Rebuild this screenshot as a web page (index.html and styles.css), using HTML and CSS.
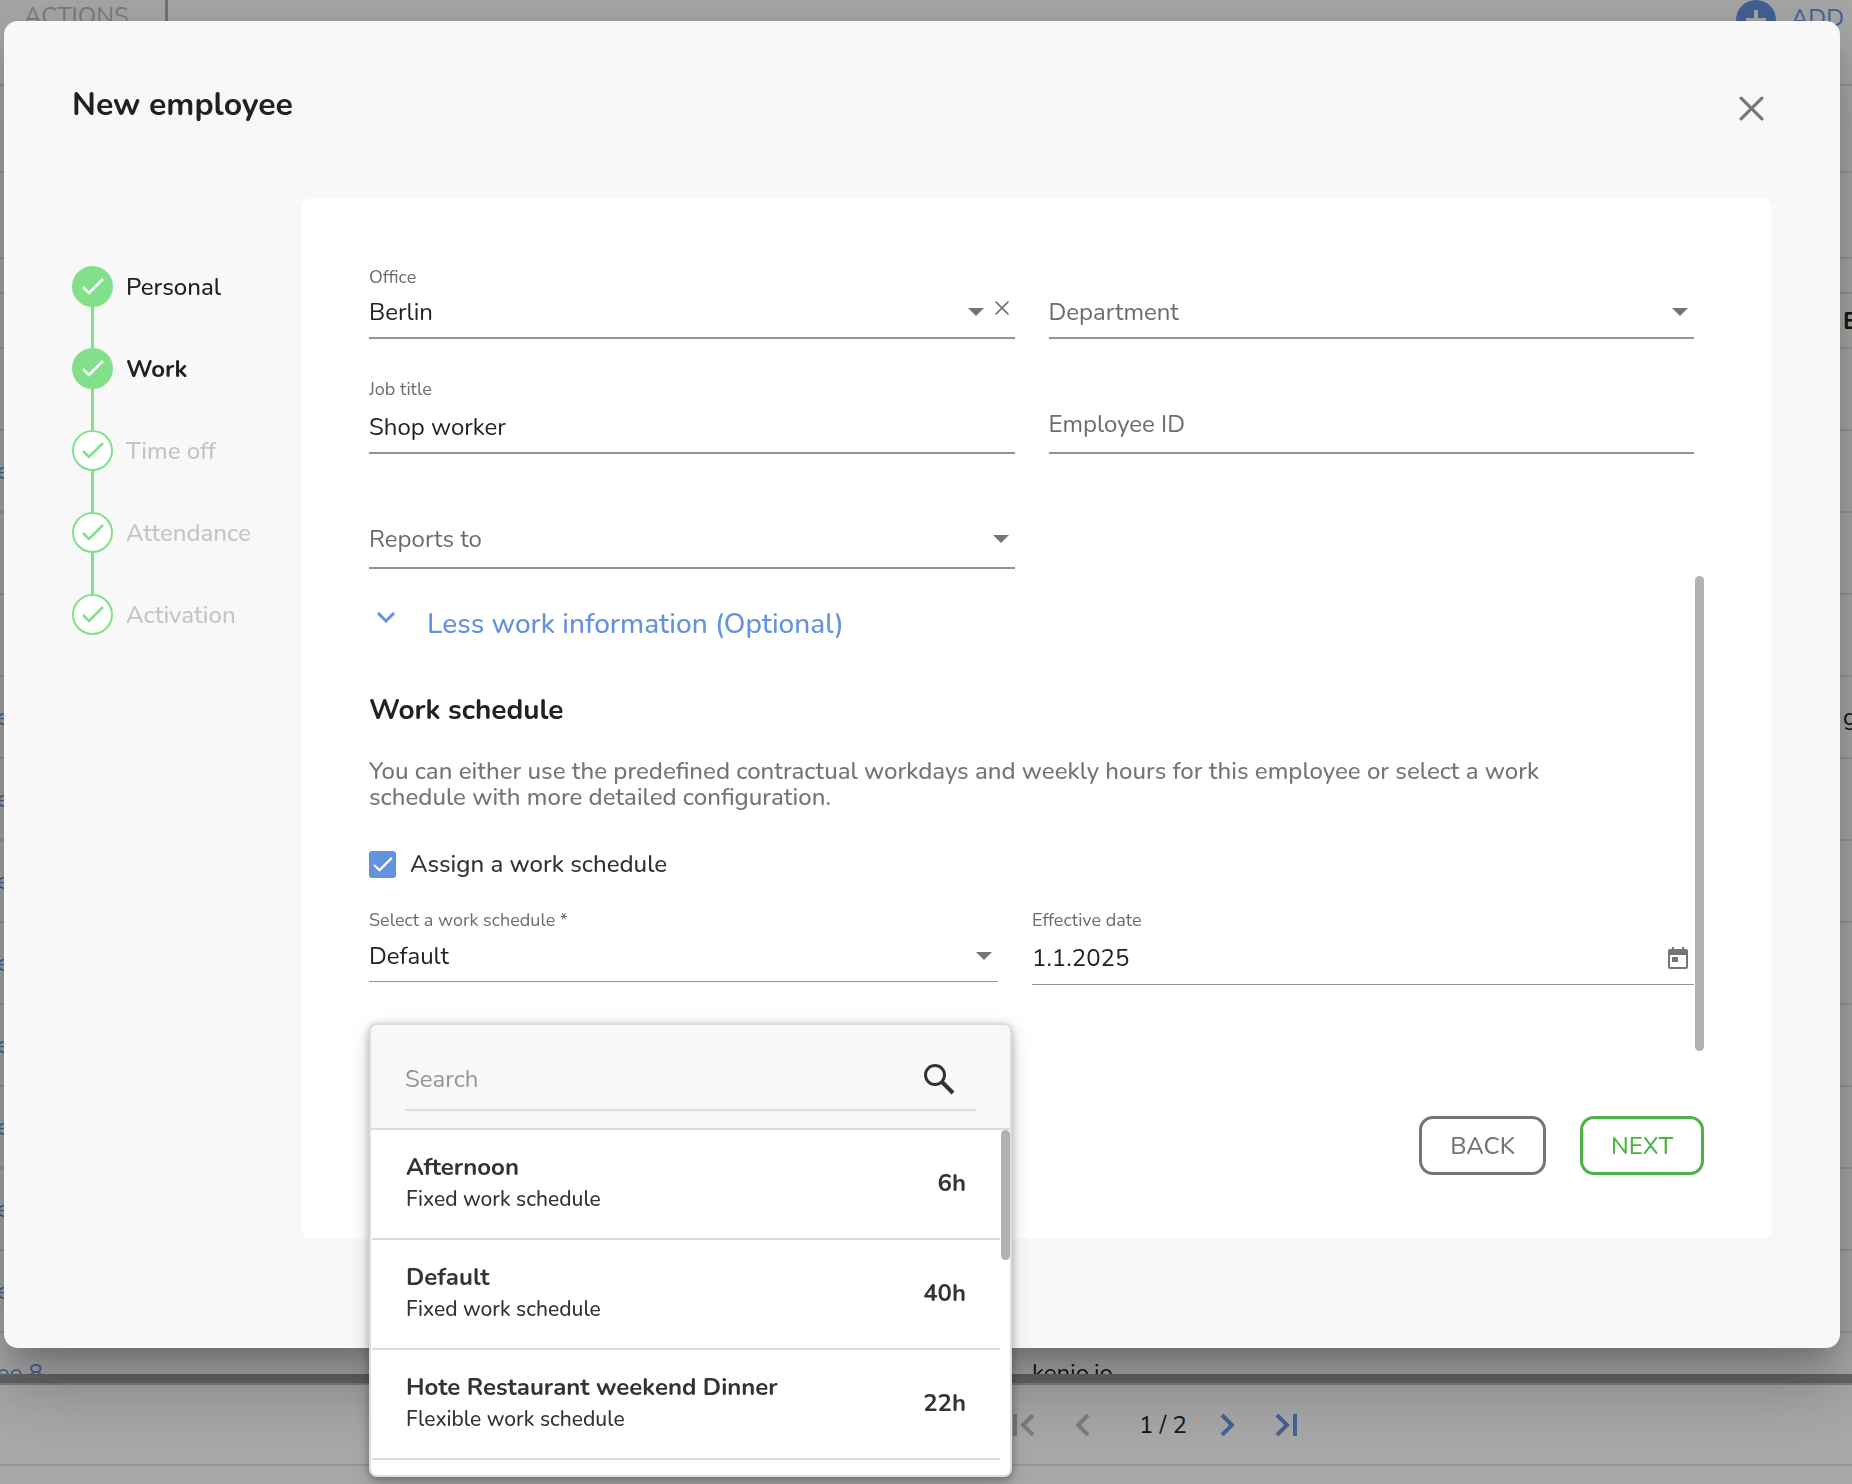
FILE: index.html
```html
<!DOCTYPE html>
<html lang="en">
<head>
    <meta charset="UTF-8">
    <meta name="viewport" content="width=device-width, initial-scale=1.0">
    <title>New employee</title>
    <link rel="stylesheet" href="styles.css">
</head>
<body>
    <svg class="sprite" aria-hidden="true">
        <symbol id="check" viewBox="0 0 22 17"><path d="M1 9l6 6L21 1" fill="none" stroke="currentColor" stroke-width="2.6"/></symbol>
        <symbol id="caret" viewBox="0 0 16 8"><path d="M0 0h16L8 8z" fill="currentColor"/></symbol>
        <symbol id="cross" viewBox="0 0 24 24"><path d="M2 2l20 20M22 2L2 22" fill="none" stroke="currentColor" stroke-width="3" stroke-linecap="round"/></symbol>
    </svg>

    <div class="page">
        <div class="toolbar">
            <span class="actions">ACTIONS</span>
            <button type="button" class="add">
                <svg width="40" height="40" viewBox="0 0 40 40"><circle cx="20" cy="20" r="20" fill="#6392de"/><path d="M20 10v20M10 20h20" stroke="#f7f7f7" stroke-width="4"/></svg>
                ADD
            </button>
        </div>
        <div class="tableWrap">
            <table class="people">
                <colgroup><col class="colName"><col class="colCompany"><col></colgroup>
                <tr class="filters"><td colspan="3"></td></tr>
                <tr class="filters"><td colspan="3"></td></tr>
                <tr class="spacer"><td colspan="3"></td></tr>
                <tr class="head"><th></th><th></th><th>E</th></tr>
                <tr><td></td><td></td><td></td></tr>
                <tr><td><a href="#">Employee</a></td><td></td><td></td></tr>
                <tr><td></td><td></td><td></td></tr>
                <tr><td></td><td></td><td></td></tr>
                <tr><td><a href="#">Employee</a></td><td></td><td>g</td></tr>
                <tr><td><a href="#">Employee</a></td><td></td><td></td></tr>
                <tr><td><a href="#">Employee</a></td><td></td><td></td></tr>
                <tr><td><a href="#">Employee</a></td><td></td><td></td></tr>
                <tr><td><a href="#">Employee</a></td><td></td><td></td></tr>
                <tr><td><a href="#">Employee</a></td><td></td><td></td></tr>
                <tr><td><a href="#">Employee</a></td><td></td><td></td></tr>
                <tr><td><a href="#">Employee</a></td><td></td><td></td></tr>
                <tr><td><a href="#">Employee 8</a></td><td>kenjo.io</td><td></td></tr>
            </table>
        </div>
        <div class="scrollX"></div>
        <div class="pager">
            <button type="button" class="off" aria-label="First page"><svg width="22" height="22" viewBox="0 0 22 22"><path d="M2 0v22M20 1L10 11l10 10"/></svg></button>
            <button type="button" class="off" aria-label="Previous page"><svg width="14" height="22" viewBox="0 0 14 22"><path d="M12 1L2 11l10 10"/></svg></button>
            <span>1 / 2</span>
            <button type="button" aria-label="Next page"><svg width="14" height="22" viewBox="0 0 14 22"><path d="M2 1l10 10L2 21"/></svg></button>
            <button type="button" aria-label="Last page"><svg width="22" height="22" viewBox="0 0 22 22"><path d="M2 1l10 10L2 21M20 0v22"/></svg></button>
        </div>
    </div>

    <div class="overlay">
        <div class="modal" role="dialog" aria-labelledby="modalTitle">
            <div class="modalHeader">
                <h1 id="modalTitle">New employee</h1>
                <button type="button" class="close" aria-label="Close"><svg width="25" height="25"><use href="#cross"/></svg></button>
            </div>
            <div class="modalBody">
                <ol class="steps">
                    <li class="done"><span class="dot"><svg width="22" height="17"><use href="#check"/></svg></span>Personal</li>
                    <li class="done current"><span class="dot"><svg width="22" height="17"><use href="#check"/></svg></span>Work</li>
                    <li><span class="dot"><svg width="22" height="17"><use href="#check"/></svg></span>Time off</li>
                    <li><span class="dot"><svg width="22" height="17"><use href="#check"/></svg></span>Attendance</li>
                    <li><span class="dot"><svg width="22" height="17"><use href="#check"/></svg></span>Activation</li>
                </ol>

                <form class="panel">
                    <div class="scrollArea">
                        <div class="fields">
                            <div class="row">
                                <div class="field">
                                    <label for="office">Office</label>
                                    <div class="box">
                                        <select id="office"><option>Berlin</option></select>
                                        <svg class="caret" width="16" height="8"><use href="#caret"/></svg>
                                        <button type="button" class="clear" aria-label="Clear office"><svg width="14" height="14"><use href="#cross"/></svg></button>
                                    </div>
                                </div>
                                <div class="field empty">
                                    <div class="box">
                                        <select id="department" aria-label="Department"><option>Department</option></select>
                                        <svg class="caret" width="16" height="8"><use href="#caret"/></svg>
                                    </div>
                                </div>
                            </div>

                            <div class="row">
                                <div class="field">
                                    <label for="jobTitle">Job title</label>
                                    <div class="box tall"><input type="text" id="jobTitle" value="Shop worker"></div>
                                </div>
                                <div class="field empty">
                                    <div class="box raised"><input type="text" id="employeeId" aria-label="Employee ID" placeholder="Employee ID"></div>
                                </div>
                            </div>

                            <div class="row last">
                                <div class="field empty">
                                    <div class="box raised">
                                        <select id="reportsTo" aria-label="Reports to"><option>Reports to</option></select>
                                        <svg class="caret" width="16" height="8"><use href="#caret"/></svg>
                                    </div>
                                </div>
                            </div>

                            <button type="button" class="toggle">
                                <svg width="18" height="12" viewBox="0 0 18 12"><path d="M1 1l8 8 8-8" fill="none" stroke="currentColor" stroke-width="3"/></svg>
                                Less work information (Optional)
                            </button>

                            <h2>Work schedule</h2>
                            <p>You can either use the predefined contractual workdays and weekly hours for this employee or select a work schedule with more detailed configuration.</p>

                            <label class="checkRow">
                                <span class="tick">
                                    <input type="checkbox" checked>
                                    <svg width="20" height="15"><use href="#check"/></svg>
                                </span>
                                Assign a work schedule
                            </label>

                            <div class="row schedule">
                                <div class="field">
                                    <label for="workSchedule">Select a work schedule *</label>
                                    <div class="box">
                                        <select id="workSchedule"><option>Default</option></select>
                                        <svg class="caret" width="16" height="8"><use href="#caret"/></svg>
                                    </div>

                                    <!-- open list of schedules -->
                                    <div class="dropdown">
                                        <div class="searchHead">
                                            <div class="search">
                                                <input type="text" placeholder="Search" aria-label="Search">
                                                <svg width="32" height="32" viewBox="0 0 32 32"><circle cx="12" cy="12" r="9.5" fill="none" stroke="currentColor" stroke-width="3"/><path d="M19 19l11 11" stroke="currentColor" stroke-width="4"/></svg>
                                            </div>
                                        </div>
                                        <div class="optionArea">
                                            <ul class="options">
                                                <li><div><strong>Afternoon</strong><small>Fixed work schedule</small></div><b>6h</b></li>
                                                <li><div><strong>Default</strong><small>Fixed work schedule</small></div><b>40h</b></li>
                                                <li><div><strong>Hote Restaurant weekend Dinner</strong><small>Flexible work schedule</small></div><b>22h</b></li>
                                            </ul>
                                            <div class="thumb"></div>
                                        </div>
                                    </div>
                                </div>
                                <div class="field">
                                    <label for="effectiveDate">Effective date</label>
                                    <div class="box tall">
                                        <input type="text" id="effectiveDate" value="1.1.2025">
                                        <svg class="calendar" width="20" height="22" viewBox="0 0 20 22"><path d="M4 0h2v2h8V0h2v2h2a2 2 0 0 1 2 2v16a2 2 0 0 1-2 2H2a2 2 0 0 1-2-2V4a2 2 0 0 1 2-2h2zM2 8v12h16V8z" fill="currentColor" fill-rule="evenodd"/><path d="M4 10h6v5H4z" fill="currentColor"/></svg>
                                    </div>
                                </div>
                            </div>
                        </div>
                        <div class="thumb"></div>
                    </div>

                    <div class="buttons">
                        <button type="button" class="back">BACK</button>
                        <button type="button" class="next">NEXT</button>
                    </div>
                </form>
            </div>
        </div>
    </div>
</body>
</html>
```
FILE: styles.css
```css
* {
    box-sizing: border-box;
}

body {
    font-family: Nunito, 'Noto Sans', sans-serif;
    font-size: 24px;
    color: #212121;
    margin: 0;
}

button, input, select {
    font-family: inherit;
    font-size: inherit;
    color: inherit;
    background: none;
    border: none;
    border-radius: 0;
    padding: 0;
    margin: 0;
}

button {
    cursor: pointer;
}

svg {
    display: block;
    flex: none;
}

.sprite {
    display: none;
}

/* list behind the dialog */
.page {
    height: 100vh;
    overflow: hidden;
    display: flex;
    flex-direction: column;
    background-color: #f7f7f7;
}

.toolbar {
    flex: none;
    height: 86px;
    display: flex;
    justify-content: space-between;
    align-items: flex-start;
    padding: 0 8px 0 24px;
    border-bottom: 2px solid #ddd;
}

.actions {
    height: 44px;
    line-height: 32px;
    padding-right: 36px;
    color: #b8b8b8;
    border-right: 3px solid #aaa;
}

.add {
    display: flex;
    gap: 15px;
    line-height: 36px;
    color: #6392de;
}

.tableWrap {
    flex: 1;
    min-height: 0;
    overflow: hidden;
}

.people {
    width: calc(100% + 120px);
    margin-left: -84px;
    table-layout: fixed;
    border-collapse: collapse;
}

.people td, .people th {
    height: 82px;
    padding: 0;
    text-align: left;
    border-bottom: 2px solid #ddd;
}

.colName {
    width: 1116px;
}

.colCompany {
    width: 811px;
}

.people a {
    color: #6392de;
    text-decoration: none;
}

.people .filters td {
    height: 86px;
}

.people .spacer td {
    height: 35px;
}

.people .head th {
    height: 55px;
}

.scrollX {
    flex: none;
    height: 9px;
    background-color: #969696;
}

.pager {
    flex: none;
    height: 83px;
    margin-bottom: 18px;
    padding-left: 458px;
    display: flex;
    justify-content: center;
    align-items: center;
    border-top: 2px solid #bbb;
    border-bottom: 2px solid #ddd;
    gap: 41px;
}

.pager span {
    margin: 0 -8px 0 8px;
}

.pager svg {
    fill: none;
    stroke: #6392de;
    stroke-width: 4;
}

.pager .off svg {
    stroke: #b8b8b8;
}

/* dialog */
.overlay {
    position: fixed;
    inset: 0;
    padding: 21px 12px 0 4px;
    background-color: rgba(0, 0, 0, 0.32);
}

.modal {
    padding: 0 68px 109px;
    background-color: #f8f8f8;
    border-radius: 14px;
    box-shadow: 0 19px 26px -12px rgba(0, 0, 0, 0.2), 0 41px 65px 5px rgba(0, 0, 0, 0.14), 0 15px 78px 14px rgba(0, 0, 0, 0.12);
}

.modalHeader {
    height: 177px;
    padding: 63px 8px 0 0;
    display: flex;
    justify-content: space-between;
    align-items: flex-start;
}

h1 {
    margin: 0;
    font-size: 32px;
    line-height: 42px;
}

.close {
    margin-top: 12px;
    color: #757575;
}

.modalBody {
    display: flex;
    align-items: stretch;
}

.steps {
    flex: none;
    width: 229px;
    margin: 0;
    padding: 68px 0 0;
    list-style: none;
}

.steps li {
    display: flex;
    align-items: center;
    gap: 13px;
    height: 41px;
    margin-bottom: 41px;
    font-weight: 500;
    color: #c4c4c4;
}

.steps .done {
    color: #212121;
}

.steps .current {
    font-weight: bold;
}

.dot {
    position: relative;
    width: 41px;
    height: 41px;
    display: flex;
    justify-content: center;
    align-items: center;
    border: 2px solid #82e08a;
    border-radius: 50%;
    background-color: #fff;
    color: #82e08a;
}

.steps .done .dot {
    background-color: #82e08a;
    color: #fff;
}

/* line down to the next step */
.steps li:not(:last-child) .dot::after {
    content: '';
    position: absolute;
    top: 39px;
    left: 17px;
    width: 3px;
    height: 41px;
    background-color: #82e08a;
}

.panel {
    flex: 1;
    min-width: 0;
    padding: 67px 68px 64px;
    background-color: #fff;
    border-radius: 10px;
}

.scrollArea {
    display: flex;
    gap: 1px;
}

.fields {
    flex: 1;
    min-width: 0;
    padding-bottom: 66px;
}

.thumb {
    flex: none;
    width: 9px;
    border-radius: 5px;
    background-color: #b1b1b1;
}

.scrollArea > .thumb {
    margin-top: 311px;
}

.row {
    display: grid;
    grid-template-columns: 1fr 1fr;
    column-gap: 34px;
    margin-bottom: 38px;
}

.row.last {
    margin: 62px 0 36px;
}

.row.schedule {
    grid-template-columns: 629fr 662fr;
    align-items: start;
    margin: 30px 0 0;
}

.field {
    position: relative;
    display: flex;
    flex-direction: column;
    justify-content: flex-end;
}

.field label {
    font-size: 18px;
    line-height: 24px;
    color: #6b6b6b;
}

.box {
    display: flex;
    align-items: center;
    height: 50px;
    padding: 0 6px 2px 0;
    border-bottom: 2px solid #949494;
}

.box.tall {
    height: 53px;
    padding-bottom: 0;
}

.box.raised {
    height: 53px;
    padding-bottom: 6px;
}

.schedule .box {
    border-bottom-width: 1px;
}

.box select, .box input {
    flex: 1;
    min-width: 0;
    height: 36px;
    appearance: none;
    outline: none;
}

.empty select, .empty input::placeholder {
    color: #6b6b6b;
    opacity: 1;
}

.caret, .calendar, .clear {
    color: #757575;
}

.clear {
    margin: 0 0 8px 11px;
}

.toggle {
    display: flex;
    align-items: center;
    gap: 32px;
    padding-left: 8px;
    font-size: 28px;
    font-weight: 500;
    line-height: 38px;
    color: #6392de;
}

.toggle svg {
    margin-bottom: 12px;
}

h2 {
    margin: 49px 0 30px;
    font-size: 28px;
    line-height: 36px;
}

p {
    margin: 0 0 40px;
    padding-right: 76px;
    font-weight: 500;
    line-height: 26px;
    color: #757575;
}

.checkRow {
    display: flex;
    align-items: center;
    gap: 14px;
    height: 28px;
    font-weight: 500;
    color: #333;
}

.tick {
    display: grid;
    place-items: center;
    color: #fff;
}

.tick input, .tick svg {
    grid-area: 1 / 1;
}

.tick input {
    width: 27px;
    height: 27px;
    appearance: none;
    border-radius: 3px;
    background-color: #6392de;
}

.tick svg {
    z-index: 1;
    pointer-events: none;
}

.dropdown {
    position: absolute;
    top: 115px;
    left: 0;
    width: calc(100% + 14px);
    height: 454px;
    overflow: hidden;
    background-color: #fff;
    border: 2px solid #ddd;
    border-radius: 8px;
    box-shadow: 0 3px 9px rgba(0, 0, 0, 0.3), 0 8px 24px rgba(0, 0, 0, 0.12);
    color: #333;
}

.searchHead {
    height: 105px;
    padding: 24px 34px 0;
    background-color: #f8f8f8;
    border-bottom: 2px solid #ddd;
}

.search {
    display: flex;
    align-items: center;
    height: 62px;
    padding: 0 21px 0 0;
    border-bottom: 2px solid #ddd;
}

.search input {
    flex: 1;
    min-width: 0;
    outline: none;
}

.search input::placeholder {
    color: #949494;
}

.optionArea {
    display: flex;
}

.optionArea .thumb {
    height: 130px;
}

.options {
    flex: 1;
    margin: 0 1px;
    padding: 0;
    list-style: none;
}

.options li {
    height: 110px;
    padding: 0 34px 2px;
    display: flex;
    justify-content: space-between;
    align-items: center;
    border-bottom: 2px solid #ddd;
}

.options strong, .options small {
    display: block;
    line-height: 32px;
}

.options small {
    font-size: 21px;
    font-weight: 500;
}

.buttons {
    display: flex;
    justify-content: flex-end;
    gap: 34px;
    margin-top: 65px;
}

.buttons button {
    height: 59px;
    padding: 0 28px;
    font-weight: 500;
    border: 3px solid;
    border-radius: 14px;
}

.back {
    color: #757575;
}

.next {
    color: #4db346;
}
```
